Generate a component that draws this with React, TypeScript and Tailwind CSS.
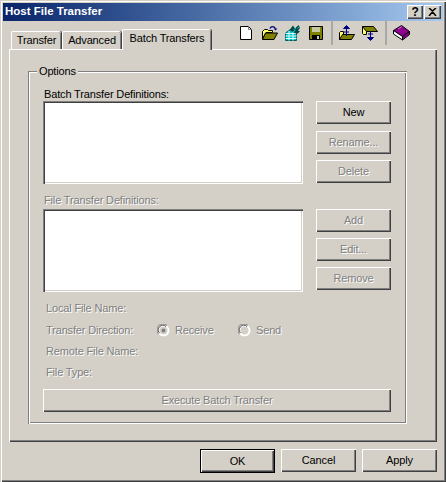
const raised =
  "shadow-[inset_1px_1px_0_#ffffff,inset_-1px_-1px_0_#404040,inset_-2px_-2px_0_#808080]";
const disabled = "text-[#808080] [text-shadow:1px_1px_0_#ffffff]";

const Btn = ({ label, off, className = "" }: { label: string; off?: boolean; className?: string }) => (
  <div className={`flex h-[23px] w-[75px] items-center justify-center bg-[#d4d0c8] ${raised} ${off ? disabled : "text-black"} ${className}`}>
    {label}
  </div>
);

const ListBox = () => (
  <div className="h-[83px] w-[260px] bg-white shadow-[inset_1px_1px_0_#808080,inset_2px_2px_0_#404040,inset_-1px_-1px_0_#ffffff,inset_-2px_-2px_0_#d4d0c8]" />
);

const Radio = ({ checked }: { checked?: boolean }) => (
  <svg width="13" height="13" viewBox="0 0 13 13" className="shrink-0">
    <circle cx="6.5" cy="6.5" r="6" fill="#ffffff" />
    <path d="M1.5 10 A6 6 0 0 1 10 1.5" fill="none" stroke="#808080" />
    <path d="M2.5 9 A4.6 4.6 0 0 1 9 2.5" fill="none" stroke="#404040" />
    <circle cx="6.5" cy="6.5" r="4" fill="#d4d0c8" />
    {checked && <circle cx="6.5" cy="6.5" r="2" fill="#808080" />}
  </svg>
);

const Tab = ({ label, active, className = "" }: { label: string; active?: boolean; className?: string }) => (
  <div
    className={`flex items-center justify-center rounded-t-[2px] border-l border-t border-white bg-[#d4d0c8] shadow-[inset_-1px_0_0_#808080,1px_0_0_#404040] ${
      active ? "relative z-10 -mb-px h-[21px] pb-[3px]" : "h-[18px]"
    } ${className}`}
  >
    {label}
  </div>
);

const IconNew = () => (
  <svg width="16" height="16" viewBox="0 0 16 16">
    <path d="M1.5 1.5h8l3 3v10h-11z" fill="#fff" stroke="#000" />
    <path d="M9.5 1.5v3h3" fill="none" stroke="#808080" />
  </svg>
);

const IconOpen = () => (
  <svg width="16" height="16" viewBox="0 0 16 16">
    <path d="M.5 6.500l2-2h3l1 1h4v2H4l-3.500 6.500z" fill="#ffff66" stroke="#000" />
    <path d="M.5 14.500l3-6.500h12l-3.500 6.500z" fill="#808000" stroke="#000" />
    <path d="M8 3.500C9 1 12 1 13.500 3.500" fill="none" stroke="#000080" strokeWidth="1.200" />
    <path d="M11.500 3.500h4l-2 2z" fill="#000080" />
  </svg>
);

const IconWizard = () => (
  <svg width="16" height="16" viewBox="0 0 16 16">
    <path d="M.5 8l5-3.500h6v11h-11z" fill="#00c0c0" stroke="#006060" />
    <path d="M.5 11h11M4 6v9.500M8 5v10.500M.5 13.500h11M.5 8.500h11" stroke="#d8ffff" />
    <path d="M4.500 5l3.500-4.500 2 3 3.500-3.500 1.500 3-2 2.500 2 1-3 2.500-3.500-1.500z" fill="#004848" />
    <path d="M9 4.500l1.500-1.500M12.500 3.500l1.500-1.500M8 7l2.500-2" stroke="#00e0e0" />
  </svg>
);

const IconSave = () => (
  <svg width="16" height="16" viewBox="0 0 16 16">
    <path d="M1.500 1.500h13v13h-13z" fill="#808000" stroke="#000" />
    <path d="M4 2h8v5H4z" fill="#c8c8a0" />
    <path d="M4 10h8v5H4z" fill="#000" />
    <path d="M9 11h2v3H9z" fill="#c8c8c8" />
  </svg>
);

const IconUp = () => (
  <svg width="16" height="16" viewBox="0 0 16 16">
    <path d="M.5 7.500l1-1h3v8h-4z" fill="#ffff66" stroke="#000" />
    <path d="M.5 14.500l3-5h12l-3 5z" fill="#808000" stroke="#000" />
    <path d="M7.500 2v9" stroke="#000080" />
    <path d="M7.500 .5l3 3h-6zM5 7h5" fill="#000080" stroke="#000080" />
  </svg>
);

const IconDown = () => (
  <svg width="16" height="16" viewBox="0 0 16 16">
    <path d="M.5 1.500h4v8h-3l-1-1z" fill="#ffff66" stroke="#000" />
    <path d="M.5 1.500h11l4 5h-11z" fill="#808000" stroke="#000" />
    <path d="M8.500 6v9" stroke="#000080" />
    <path d="M8.500 15.500l-3-3h6zM6 9h5" fill="#000080" stroke="#000080" />
  </svg>
);

const IconBook = () => (
  <svg width="17" height="16" viewBox="0 0 17 16">
    <path d="M.5 5.500l8-5 8 6-7 5z" fill="#900090" stroke="#000" />
    <path d="M.5 5.500l9 6v3.500l-9-6z" fill="#ffffff" stroke="#000" />
    <path d="M9.500 11.500l7-5v3l-7 5.500z" fill="#900090" stroke="#000" />
    <path d="M5 4l4-2.500" stroke="#d070d0" />
  </svg>
);

const Sep = () => <div className="h-[25px] w-[2px] bg-[#a8a8a8]" />;

export default function App() {
  return (
    <div className="h-[482px] w-[446px] overflow-hidden bg-[#d4d0c8] p-[3px] font-['Liberation_Sans',Arial,sans-serif] text-[11px] leading-none tracking-[-0.15px] text-black shadow-[inset_1px_1px_0_#d4d0c8,inset_2px_2px_0_#ffffff,inset_-1px_-1px_0_#404040,inset_-2px_-2px_0_#808080]">
      {/* title bar */}
      <div className="flex h-[18px] items-center justify-between bg-gradient-to-r from-[#0a246a] to-[#a6caf0] pl-[2px] pr-[2px]">
        <span className="text-[11.5px] font-bold tracking-normal text-white">Host File Transfer</span>
        <div className="flex gap-[1px]">
          <div className={`flex h-[14px] w-[16px] items-center justify-center bg-[#d4d0c8] text-[12px] font-bold ${raised}`}>?</div>
          <div className={`flex h-[14px] w-[17px] items-center justify-center bg-[#d4d0c8] ${raised}`}>
            <svg width="9" height="8" viewBox="0 0 9 8">
              <path d="M1 0l3.500 3L8 0M1 8l3.500-4L8 8" fill="none" stroke="#000" strokeWidth="1.500" />
            </svg>
          </div>
        </div>
      </div>

      {/* tabs and toolbar */}
      <div className="flex h-[28px] items-end pl-[8px]">
        <Tab label="Transfer" className="w-[50px]" />
        <Tab label="Advanced" className="ml-[1px] w-[59px]" />
        <Tab label="Batch Transfers" active className="ml-[1px] w-[89px]" />
        <div className="mb-[4px] ml-[28px] flex h-[25px] items-center">
          <div className="flex w-[92px] items-center gap-[7px]">
            <IconNew />
            <IconOpen />
            <IconWizard />
            <IconSave />
          </div>
          <Sep />
          <div className="ml-[6px] flex w-[46px] items-center gap-[7px]">
            <IconUp />
            <IconDown />
          </div>
          <Sep />
          <div className="ml-[6px]">
            <IconBook />
          </div>
        </div>
      </div>

      {/* tab panel */}
      <div className="ml-[6px] h-[393px] w-[428px] pl-[19px] pt-[22px] shadow-[inset_1px_1px_0_#ffffff,inset_-1px_-1px_0_#404040,inset_-2px_-2px_0_#808080]">
        {/* Options group */}
        <div className="relative h-[353px] w-[379px] pl-[15px] pt-[15px] shadow-[inset_1px_1px_0_#808080,inset_2px_2px_0_#ffffff,inset_-1px_-1px_0_#ffffff,inset_-2px_-2px_0_#808080]">
          <span className="absolute left-[9px] top-[-6px] bg-[#d4d0c8] px-[2px] leading-[13px]">Options</span>

          <div className="h-[15px] pl-px pt-[3px]">Batch Transfer Definitions:</div>
          <div className="flex gap-[13px]">
            <ListBox />
            <div className="flex flex-col">
              <Btn label="New" />
              <Btn label="Rename..." off className="mt-[7px]" />
              <Btn label="Delete" off className="mt-[6px]" />
            </div>
          </div>

          <div className={`mt-[10px] h-[15px] pl-px pt-[1px] ${disabled}`}>File Transfer Definitions:</div>
          <div className="flex gap-[13px]">
            <ListBox />
            <div className="flex flex-col">
              <Btn label="Add" off />
              <Btn label="Edit..." off className="mt-[6px]" />
              <Btn label="Remove" off className="mt-[6px]" />
            </div>
          </div>

          <div className={`mt-[6px] pl-[3px] ${disabled}`}>
            <div className="flex h-[21px] items-center">Local File Name:</div>
            <div className="flex h-[22px] items-center">
              <span className="w-[111px]">Transfer Direction:</span>
              <Radio checked />
              <span className="ml-[5px] w-[63px]">Receive</span>
              <Radio />
              <span className="ml-[5px]">Send</span>
            </div>
            <div className="flex h-[21px] items-center">Remote File Name:</div>
            <div className="flex h-[21px] items-center">File Type:</div>
          </div>

          <Btn label="Execute Batch Transfer" off className="mt-[6px] !w-[348px]" />
        </div>
      </div>

      {/* dialog buttons */}
      <div className="mt-[7px] flex gap-[6px] pl-[197px]">
        <div className="border border-black">
          <Btn label="OK" className="!h-[22px] !w-[73px]" />
        </div>
        <Btn label="Cancel" />
        <Btn label="Apply" />
      </div>
    </div>
  );
}
